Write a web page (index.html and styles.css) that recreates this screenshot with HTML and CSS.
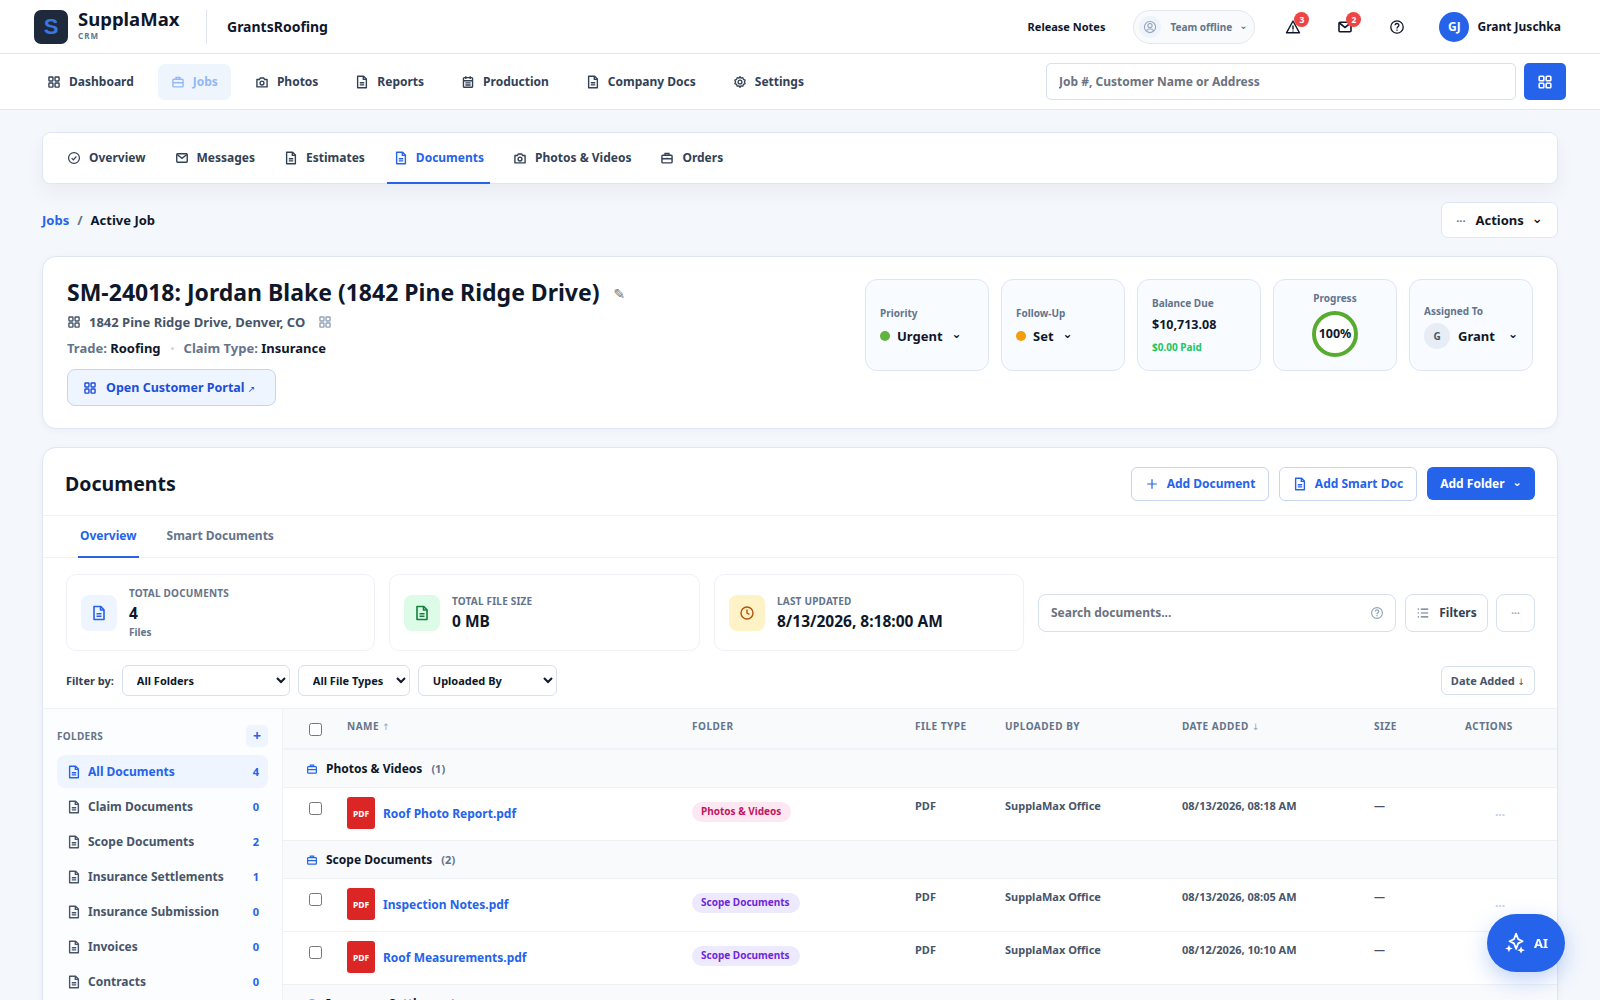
FILE: index.html
```html
<!DOCTYPE html>
<html lang="en">
<head>
<meta charset="utf-8">
<title>SupplaMax CRM - Documents</title>
<link rel="stylesheet" href="styles.css">
</head>
<body>
<svg class="sprite" width="0" height="0" aria-hidden="true">
  <defs>
    <symbol id="i-grid" viewBox="0 0 16 16"><g fill="none" stroke="currentColor" stroke-width="1.6"><rect x="2.2" y="2.2" width="4.6" height="4.6" rx=".7"/><rect x="9.2" y="2.2" width="4.6" height="4.6" rx=".7"/><rect x="2.2" y="9.2" width="4.6" height="4.6" rx=".7"/><rect x="9.2" y="9.2" width="4.6" height="4.6" rx=".7"/></g></symbol>
    <symbol id="i-case" viewBox="0 0 16 16"><g fill="none" stroke="currentColor" stroke-width="1.6"><rect x="2.2" y="4.800" width="11.600" height="8.800" rx="1"/><path d="M5.800 4.800V2.800h4.400v2M2.200 8.800h11.600M8 7.800v2"/></g></symbol>
    <symbol id="i-camera" viewBox="0 0 16 16"><g fill="none" stroke="currentColor" stroke-width="1.6"><path d="M2.200 5.200h2.800l1-1.800h4l1 1.800h2.800v8.400H2.200z" stroke-linejoin="round"/><circle cx="8" cy="9.200" r="2.200"/></g></symbol>
    <symbol id="i-doc" viewBox="0 0 16 16"><g fill="none" stroke="currentColor" stroke-width="1.600" stroke-linejoin="round"><path d="M3 1.500h6.800l3.200 3.200v9.800H3z"/><path d="M9.500 1.500v3.500H13M5.500 8.800h5M5.500 11.300h5"/></g></symbol>
    <symbol id="i-cal" viewBox="0 0 16 16"><g fill="none" stroke="currentColor" stroke-width="1.600"><rect x="2.800" y="3" width="10.400" height="11" rx="1"/><path d="M2.800 6.500h10.400M5.500 1.500v3M10.500 1.500v3M5 9h6M5 11.500h6"/></g></symbol>
    <symbol id="i-gear" viewBox="0 0 16 16"><g fill="none" stroke="currentColor" stroke-width="1.500"><circle cx="8" cy="8" r="2.200"/><path d="M8 1.800l1.200 1.700 2-.5.7 2 1.900.9-.7 2 .7 2-1.900.9-.7 2-2-.5L8 14.200l-1.200-1.900-2 .5-.7-2-1.900-.9.7-2-.7-2 1.900-.9.7-2 2 .5z" stroke-linejoin="round"/></g></symbol>
    <symbol id="i-check" viewBox="0 0 16 16"><g fill="none" stroke="currentColor" stroke-width="1.400"><circle cx="8" cy="8" r="6.200"/><path d="M5.300 8.200l1.900 1.900 3.500-3.800"/></g></symbol>
    <symbol id="i-mail" viewBox="0 0 16 16"><g fill="none" stroke="currentColor" stroke-width="1.600"><rect x="2" y="3.200" width="12" height="9.600" rx="1"/><path d="M2.400 4l5.600 4.400L13.600 4"/></g></symbol>
    <symbol id="i-alert" viewBox="0 0 16 16"><g fill="none" stroke="currentColor" stroke-width="1.400"><path d="M8 2L1.500 13.800h13z" stroke-linejoin="round"/><path d="M8 6.400v4M8 11.400v1.100"/></g></symbol>
    <symbol id="i-help" viewBox="0 0 16 16"><g fill="none" stroke="currentColor" stroke-width="1.300"><circle cx="8" cy="8" r="6.200"/><path d="M6.100 6.300c0-2.400 3.800-2.400 3.800-.1 0 1.500-1.900 1.600-1.900 3.200M8 10.400v1.300"/></g></symbol>
    <symbol id="i-user" viewBox="0 0 16 16"><g fill="none" stroke="currentColor" stroke-width="1.200"><circle cx="8" cy="8" r="6.400"/><circle cx="8" cy="6.400" r="2.400"/><path d="M3.800 12.600c1-2 2.400-2.600 4.200-2.600s3.200.6 4.200 2.600"/></g></symbol>
    <symbol id="i-list" viewBox="0 0 16 16"><g fill="none" stroke="currentColor" stroke-width="1.300"><path d="M5.500 3.500H14M5.500 8H14M5.500 12.500H14M2 3.500h1.400M2 8h1.400M2 12.500h1.400"/></g></symbol>
    <symbol id="i-clock" viewBox="0 0 16 16"><g fill="none" stroke="currentColor" stroke-width="1.400"><circle cx="8" cy="8" r="6"/><path d="M8 4.500V8l2.400 1.500"/></g></symbol>
    <symbol id="i-plus" viewBox="0 0 16 16"><path d="M8 2.500v11M2.500 8h11" fill="none" stroke="currentColor" stroke-width="1.400"/></symbol>
    <symbol id="i-spark" viewBox="0 0 20 20"><path d="M11 1.500l1.900 5 4.100 1.900-4.100 1.900-1.900 5-1.900-5L5 8.400l4.100-1.900z" fill="none" stroke="currentColor" stroke-width="1.600" stroke-linejoin="round"/><path d="M4.500 11.500l1 2.500 2.500 1-2.500 1-1 2.500-1-2.500L1 15l2.500-1zM15.500 13l1 2.500 2.500 1-2.500 1-1 2-1-2-2.500-1 2.500-1z" fill="currentColor"/></symbol>
  </defs>
</svg>

<header class="topbar">
  <div class="brand">
    <span class="logo">S</span>
    <div class="brand-text"><span class="brand-name">SupplaMax</span><span class="brand-sub">CRM</span></div>
    <span class="brand-org">GrantsRoofing</span>
  </div>
  <div class="top-right">
    <a class="release">Release Notes</a>
    <div class="team-pill">
      <span class="team-ic"><svg class="ic14"><use href="#i-user"/></svg></span>
      <span>Team offline</span><span class="chev">⌄</span>
    </div>
    <span class="bell"><svg class="ic16"><use href="#i-alert"/></svg><b class="badge">3</b></span>
    <span class="bell mail"><svg class="ic16"><use href="#i-mail"/></svg><b class="badge">2</b></span>
    <span class="bell help"><svg class="ic16"><use href="#i-help"/></svg></span>
    <div class="user"><span class="avatar">GJ</span><span>Grant Juschka</span></div>
  </div>
</header>

<nav class="mainnav">
  <div class="nav-items">
    <a class="nav-item"><svg class="ic14"><use href="#i-grid"/></svg>Dashboard</a>
    <a class="nav-item is-active"><svg class="ic14"><use href="#i-case"/></svg>Jobs</a>
    <a class="nav-item"><svg class="ic14"><use href="#i-camera"/></svg>Photos</a>
    <a class="nav-item"><svg class="ic14"><use href="#i-doc"/></svg>Reports</a>
    <a class="nav-item"><svg class="ic14"><use href="#i-cal"/></svg>Production</a>
    <a class="nav-item"><svg class="ic14"><use href="#i-doc"/></svg>Company Docs</a>
    <a class="nav-item"><svg class="ic14"><use href="#i-gear"/></svg>Settings</a>
  </div>
  <div class="nav-search">
    <input class="nav-input" type="text" placeholder="Job #, Customer Name or Address">
    <button class="nav-btn"><svg class="ic16"><use href="#i-grid"/></svg></button>
  </div>
</nav>

<main class="content">
  <div class="card tabs">
    <a class="tab"><svg class="ic14"><use href="#i-check"/></svg>Overview</a>
    <a class="tab"><svg class="ic14"><use href="#i-mail"/></svg>Messages</a>
    <a class="tab"><svg class="ic14"><use href="#i-doc"/></svg>Estimates</a>
    <a class="tab is-active"><svg class="ic14"><use href="#i-doc"/></svg>Documents</a>
    <a class="tab"><svg class="ic14"><use href="#i-camera"/></svg>Photos &amp; Videos</a>
    <a class="tab"><svg class="ic14"><use href="#i-case"/></svg>Orders</a>
  </div>

  <div class="crumbs">
    <div class="crumb-path"><a class="crumb-link">Jobs</a><span class="crumb-sep">/</span><span>Active Job</span></div>
    <button class="actions-btn"><span class="dots">···</span>Actions<span class="chev">⌄</span></button>
  </div>

  <section class="card job">
    <div class="job-left">
      <h1 class="job-title">SM-24018: Jordan Blake (1842 Pine Ridge Drive)<span class="pencil">✎</span></h1>
      <div class="job-addr"><svg class="ic14"><use href="#i-grid"/></svg><span>1842 Pine Ridge Drive, Denver, CO</span><svg class="ic14 faint"><use href="#i-grid"/></svg></div>
      <div class="job-meta"><span>Trade: <b>Roofing</b></span><i class="sep-dot"></i><span>Claim Type: <b>Insurance</b></span></div>
      <a class="portal-btn"><svg class="ic14"><use href="#i-grid"/></svg><span>Open Customer Portal <small class="out">↗</small></span></a>
    </div>
    <div class="tiles">
      <div class="tile tile-left"><span class="tile-label">Priority</span><div class="tile-val"><i class="dot green"></i>Urgent<span class="chev">⌄</span></div></div>
      <div class="tile tile-left"><span class="tile-label">Follow-Up</span><div class="tile-val"><i class="dot orange"></i>Set<span class="chev">⌄</span></div></div>
      <div class="tile tile-left tile-tight"><span class="tile-label">Balance Due</span><div class="tile-money">$10,713.08</div><div class="tile-paid">$0.00 Paid</div></div>
      <div class="tile tile-center"><span class="tile-label">Progress</span><div class="ring">100%</div></div>
      <div class="tile tile-left"><span class="tile-label">Assigned To</span><div class="tile-val assigned"><span class="mini-av">G</span>Grant<span class="chev push">⌄</span></div></div>
    </div>
  </section>

  <section class="card docs">
    <div class="docs-head">
      <h2 class="docs-title">Documents</h2>
      <div class="docs-btns">
        <button class="btn-outline btn-doc"><svg class="ic14"><use href="#i-plus"/></svg>Add Document</button>
        <button class="btn-outline btn-smart"><svg class="ic14"><use href="#i-doc"/></svg>Add Smart Doc</button>
        <button class="btn-solid">Add Folder<span class="chev">⌄</span></button>
      </div>
    </div>
    <div class="subtabs"><a class="subtab is-active">Overview</a><a class="subtab">Smart Documents</a></div>

    <div class="stats-row">
      <div class="stat stat-a"><span class="stat-ic blue"><svg class="ic16"><use href="#i-doc"/></svg></span><div class="stat-text"><span class="stat-label">Total Documents</span><span class="stat-val">4</span><span class="stat-note">Files</span></div></div>
      <div class="stat stat-b"><span class="stat-ic mint"><svg class="ic16"><use href="#i-doc"/></svg></span><div class="stat-text"><span class="stat-label">Total File Size</span><span class="stat-val">0 MB</span></div></div>
      <div class="stat stat-c"><span class="stat-ic amber"><svg class="ic16"><use href="#i-clock"/></svg></span><div class="stat-text"><span class="stat-label">Last Updated</span><span class="stat-val">8/13/2026, 8:18:00 AM</span></div></div>
      <div class="doc-tools">
        <div class="doc-search"><input class="doc-input" type="text" placeholder="Search documents..."><svg class="ic14 faint"><use href="#i-help"/></svg></div>
        <button class="tool-btn"><svg class="ic14"><use href="#i-list"/></svg>Filters</button>
        <button class="tool-btn more">···</button>
      </div>
    </div>

    <div class="filter-row">
      <span class="filter-label">Filter by:</span>
      <select class="sel sel-a"><option>All Folders</option></select>
      <select class="sel sel-b"><option>All File Types</option></select>
      <select class="sel sel-c"><option>Uploaded By</option></select>
      <button class="sort-btn">Date Added <small class="out">↓</small></button>
    </div>

    <div class="docs-body">
      <aside class="folders">
        <div class="folders-head"><span>Folders</span><button class="folder-add">+</button></div>
        <a class="folder is-active"><svg class="ic14"><use href="#i-doc"/></svg><span>All Documents</span><b>4</b></a>
        <a class="folder"><svg class="ic14"><use href="#i-doc"/></svg><span>Claim Documents</span><b>0</b></a>
        <a class="folder"><svg class="ic14"><use href="#i-doc"/></svg><span>Scope Documents</span><b>2</b></a>
        <a class="folder"><svg class="ic14"><use href="#i-doc"/></svg><span>Insurance Settlements</span><b>1</b></a>
        <a class="folder"><svg class="ic14"><use href="#i-doc"/></svg><span>Insurance Submission</span><b>0</b></a>
        <a class="folder"><svg class="ic14"><use href="#i-doc"/></svg><span>Invoices</span><b>0</b></a>
        <a class="folder"><svg class="ic14"><use href="#i-doc"/></svg><span>Contracts</span><b>0</b></a>
      </aside>
      <div class="doc-table">
        <div class="t-row t-head">
          <span><input type="checkbox" class="cb"></span>
          <span>Name <small>↑</small></span><span>Folder</span><span>File Type</span><span>Uploaded By</span><span>Date Added <small>↓</small></span><span>Size</span><span>Actions</span>
        </div>
        <div class="t-group"><svg class="ic12"><use href="#i-case"/></svg><b>Photos &amp; Videos</b><span>(1)</span></div>
        <div class="t-row t-item">
          <span><input type="checkbox" class="cb"></span>
          <span class="t-name"><i class="pdf">PDF</i><a>Roof Photo Report.pdf</a></span>
          <span><em class="tag pink">Photos &amp; Videos</em></span><span>PDF</span><span>SupplaMax Office</span><span>08/13/2026, 08:18 AM</span><span>—</span><span class="t-more">···</span>
        </div>
        <div class="t-group"><svg class="ic12"><use href="#i-case"/></svg><b>Scope Documents</b><span>(2)</span></div>
        <div class="t-row t-item">
          <span><input type="checkbox" class="cb"></span>
          <span class="t-name"><i class="pdf">PDF</i><a>Inspection Notes.pdf</a></span>
          <span><em class="tag violet">Scope Documents</em></span><span>PDF</span><span>SupplaMax Office</span><span>08/13/2026, 08:05 AM</span><span>—</span><span class="t-more">···</span>
        </div>
        <div class="t-row t-item">
          <span><input type="checkbox" class="cb"></span>
          <span class="t-name"><i class="pdf">PDF</i><a>Roof Measurements.pdf</a></span>
          <span><em class="tag violet">Scope Documents</em></span><span>PDF</span><span>SupplaMax Office</span><span>08/12/2026, 10:10 AM</span><span>—</span><span class="t-more">···</span>
        </div>
        <div class="t-group"><svg class="ic12"><use href="#i-case"/></svg><b>Insurance Settlements</b><span>(1)</span></div>
      </div>
    </div>
  </section>
</main>

<button class="ai-btn"><svg class="ic20"><use href="#i-spark"/></svg>AI</button>
</body>
</html>
```
FILE: styles.css
```css
* { box-sizing: border-box; }
html, body { height: 100%; overflow: hidden; }
body {
  margin: 0;
  background: #f4f7fc;
  color: #0f172a;
  font-family: "Noto Sans", "DejaVu Sans", sans-serif;
  font-size: 12px;
  font-weight: 700;
}
a { color: inherit; text-decoration: none; }
button, input, select { font-family: inherit; font-weight: 700; }
button { cursor: pointer; }
b { font-weight: 700; }
i, em { font-style: normal; }
.sprite { position: absolute; }
.ic12, .ic14, .ic16, .ic20 { flex: none; display: block; }
.ic12 { width: 12px; height: 12px; }
.ic14 { width: 14px; height: 14px; }
.ic16 { width: 16px; height: 16px; }
.ic20 { width: 22px; height: 22px; }
.faint { color: #94a3b8; }
.chev { line-height: 1; font-size: 13px; position: relative; top: -2px; margin-left: 8px; }
.out { font-size: 9px; font-weight: 400; }

/* top bar */
.topbar {
  height: 54px;
  background: #fff;
  border-bottom: 1px solid #dfe6f0;
  padding: 0 39px 0 34px;
  display: flex;
  align-items: center;
  justify-content: space-between;
}
.brand { display: flex; align-items: center; }
.logo {
  width: 34px; height: 34px;
  border-radius: 7px;
  background: #1e293b;
  color: #3b76e0;
  font: 700 22px/34px "Liberation Sans", sans-serif;
  text-align: center;
}
.brand-text { display: flex; flex-direction: column; margin-left: 10px; width: 129px; height: 34px; border-right: 1px solid #dfe6f0; }
.brand-name { font-size: 18.500px; line-height: 24px; margin-top: -3px; }
.brand-sub { font-size: 8px; line-height: 9px; letter-spacing: 1px; color: #64748b; }
.brand-org { font-size: 14px; margin-left: 20px; }
.top-right { display: flex; align-items: center; }
.release { font-size: 11px; margin-right: 28px; }
.team-pill {
  width: 122px; height: 34px;
  border: 1px solid #e2e8f0; border-radius: 17px;
  background: #f8fafc;
  color: #64748b;
  font-size: 10px;
  display: flex; align-items: center;
  padding-left: 5px;
}
.team-pill .chev { margin-left: 7px; font-size: 10px; }
.team-ic { width: 22px; height: 22px; border-radius: 50%; background: #eff3fa; color: #94a3b8; display: flex; align-items: center; justify-content: center; margin-right: 9px; }
.bell { position: relative; margin-left: 30px; color: #0f172a; }
.bell.mail { margin-left: 36px; }
.bell.help { margin-left: 36px; }
.badge {
  position: absolute; top: -7px; right: -8px;
  width: 15px; height: 15px; border-radius: 50%;
  background: #ef4444; color: #fff;
  font-size: 8.500px; line-height: 15px; text-align: center;
}
.user { display: flex; align-items: center; gap: 8px; margin-left: 34px; font-size: 12px; }
.avatar { width: 30px; height: 30px; border-radius: 50%; background: #2563eb; color: #fff; font-size: 12px; line-height: 30px; text-align: center; }

/* main nav */
.mainnav {
  height: 56px;
  background: #fff;
  border-bottom: 1px solid #dfe6f0;
  padding: 0 34px;
  display: flex; align-items: center; justify-content: space-between;
}
.nav-items { display: flex; gap: 11px; }
.nav-item { height: 36px; padding: 0 13px; display: flex; align-items: center; gap: 8px; border-radius: 7px; color: #334155; font-size: 12px; }
.nav-item.is-active { background: #eff5fd; color: #93b8f5; }
.nav-search { display: flex; gap: 8px; }
.nav-input {
  width: 470px; height: 37px;
  border: 1px solid #d5e0f0; border-radius: 5px;
  padding: 0 12px; font-size: 12px; outline: none; background: #fff;
}
.nav-input::placeholder { color: #6b7280; opacity: 1; }
.nav-btn { width: 42px; height: 37px; border: 0; border-radius: 5px; background: #2563eb; color: #fff; display: flex; align-items: center; justify-content: center; }

/* content */
.content { padding: 22px 42px 0; }
.card { background: #fff; border: 1px solid #dfe6f3; box-shadow: 0 2px 8px rgba(15, 23, 42, .04); }
.tabs { height: 52px; border-radius: 8px; padding: 0 17px; display: flex; gap: 16px; box-shadow: 0 8px 20px rgba(15, 23, 42, .05); }
.tab { height: 51px; padding: 0 6px 0 7px; display: flex; align-items: center; gap: 8px; color: #334155; font-size: 12px; border-bottom: 2px solid transparent; }
.tab.is-active { color: #2563eb; border-bottom-color: #2563eb; }

.crumbs { display: flex; align-items: center; justify-content: space-between; margin-top: 18px; height: 36px; }
.crumb-path { display: flex; gap: 8px; font-size: 13px; }
.crumb-link { color: #2563eb; }
.crumb-sep { color: #64748b; }
.actions-btn {
  width: 117px; height: 36px;
  border: 1px solid #dfe6f3; border-radius: 7px; background: #fff; color: #0f172a;
  font-size: 13px;
  display: flex; align-items: center; justify-content: center;
}
.dots { color: #64748b; font-size: 11px; margin-right: 10px; }

.job {
  margin-top: 18px;
  height: 173px;
  border-radius: 14px;
  padding: 21px 24px 0 24px;
  display: flex; justify-content: space-between; align-items: flex-start;
}
.job-title { margin: 0; font-size: 23px; line-height: 28px; font-weight: 700; }
.pencil { font-size: 14px; color: #64748b; margin-left: 14px; font-weight: 400; vertical-align: 2px; }
.job-addr { display: flex; align-items: center; gap: 8px; margin-top: 5px; height: 18px; color: #475569; font-size: 13px; }
.job-addr .faint { margin-left: 5px; }
.job-meta { display: flex; align-items: center; gap: 10px; margin-top: 8px; height: 18px; color: #64748b; font-size: 13px; }
.job-meta b { color: #0f172a; }
.sep-dot { width: 3px; height: 3px; border-radius: 50%; background: #cbd5e1; }
.portal-btn {
  width: 209px; height: 37px; margin-top: 12px;
  border: 1px solid #bfd5fb; border-radius: 8px; background: #eff5ff; color: #1d4ed8;
  display: flex; align-items: center; gap: 9px; padding-left: 15px; font-size: 12.500px;
}
.tiles { display: flex; gap: 12px; margin-top: 1px; }
.tile { width: 124px; height: 92px; border: 1px solid #dfe6f3; border-radius: 12px; background: #f8fbff; display: flex; flex-direction: column; }
.tile-left { justify-content: center; padding: 2px 14px 0; }
.tile-tight { padding-top: 0; }
.tile-center { align-items: center; padding-top: 11px; }
.tile-label { font-size: 10px; line-height: 14px; color: #64748b; }
.tile-val { display: flex; align-items: center; margin-top: 6px; font-size: 13px; line-height: 20px; }
.tile-val .chev { margin-left: 9px; font-size: 12px; }
.dot { width: 10px; height: 10px; border-radius: 50%; margin-right: 7px; }
.green { background: #62b33f; }
.orange { background: #f59e0b; }
.tile-money { font-size: 12.500px; line-height: 18px; margin-top: 6px; }
.tile-paid { font-size: 10px; line-height: 14px; margin-top: 6px; color: #22c55e; }
.ring { width: 46px; height: 46px; margin-top: 6px; border: 4px solid #57ab2e; border-radius: 50%; background: #fff; font-size: 12.500px; line-height: 38px; text-align: center; white-space: nowrap; }
.assigned { margin-top: 5px; }
.mini-av { width: 26px; height: 26px; border-radius: 50%; background: #e8edf5; color: #475569; font-size: 10px; line-height: 26px; text-align: center; margin-right: 8px; }
.push { margin-left: auto !important; }

/* documents */
.docs { margin-top: 18px; border-radius: 14px 14px 0 0; height: 800px; }
.docs-head { height: 68px; padding: 4px 22px 0; border-bottom: 1px solid #eef2f7; display: flex; align-items: center; justify-content: space-between; }
.docs-title { margin: 0; font-size: 19.500px; font-weight: 700; }
.docs-btns { display: flex; gap: 10px; }
.btn-outline { height: 34px; border: 1px solid #c6d6f0; border-radius: 6px; background: #fff; color: #2563eb; font-size: 12px; display: flex; align-items: center; justify-content: center; gap: 8px; }
.btn-doc { width: 138px; }
.btn-smart { width: 138px; }
.btn-solid { width: 108px; height: 33px; border: 0; border-radius: 6px; background: #2563eb; color: #fff; font-size: 12px; }
.btn-solid .chev { font-size: 11px; }
.subtabs { height: 42px; padding: 0 35px; display: flex; gap: 30px; border-bottom: 1px solid #eef2f7; }
.subtab { height: 42px; line-height: 39px; color: #64748b; font-size: 12px; border-bottom: 2px solid transparent; }
.subtab.is-active { color: #2563eb; border-bottom-color: #2563eb; padding: 0 2px; margin-right: -2px; }
.stats-row { display: flex; align-items: center; padding: 16px 22px 0 23px; }
.stat { height: 77px; border: 1px solid #eef2f7; border-radius: 10px; background: #fff; display: flex; align-items: center; padding-left: 14px; flex: none; }
.stat-a { width: 309px; margin-right: 14px; }
.stat-b { width: 311px; margin-right: 14px; }
.stat-c { width: 310px; margin-right: 14px; }
.stat-ic { width: 36px; height: 36px; border-radius: 8px; display: flex; align-items: center; justify-content: center; margin-right: 12px; }
.blue { background: #eff5ff; color: #2563eb; }
.mint { background: #dcfce7; color: #15803d; }
.amber { background: #fef3c7; color: #b45309; }
.stat-text { display: flex; flex-direction: column; }
.stat-label { font-size: 10px; line-height: 14px; text-transform: uppercase; color: #64748b; letter-spacing: .2px; }
.stat-val { font-size: 15.500px; line-height: 20px; margin-top: 3px; }
.stat-note { font-size: 10px; line-height: 14px; color: #64748b; margin-top: 2px; }
.doc-tools { display: flex; gap: 9px; flex: 1; }
.doc-search { width: 358px; height: 38px; border: 1px solid #d5e0f0; border-radius: 8px; display: flex; align-items: center; padding-right: 11px; }
.doc-input { flex: 1; min-width: 0; border: 0; outline: 0; background: transparent; padding: 0 12px; font-size: 12px; }
.doc-input::placeholder { color: #6b7280; opacity: 1; }
.tool-btn { width: 83px; height: 38px; border: 1px solid #d5e0f0; border-radius: 8px; background: #fff; color: #334155; font-size: 12px; display: flex; align-items: center; justify-content: center; gap: 9px; }
.tool-btn .ic14 { color: #64748b; }
.tool-btn.more { width: 39px; color: #94a3b8; font-size: 10px; margin-left: -1px; }
.filter-row { display: flex; align-items: center; gap: 8px; padding: 0 22px 0 23px; margin-top: 14px; height: 31px; }
.filter-label { font-size: 11px; color: #334155; }
.sel { height: 31px; border: 1px solid #d5e0f0; border-radius: 6px; background: #fff; color: #0f172a; font-size: 11px; padding: 0 10px; }
.sel-a { width: 168px; }
.sel-b { width: 112px; }
.sel-c { width: 139px; }
.sort-btn { margin-left: auto; width: 94px; height: 29px; border: 1px solid #d5e0f0; border-radius: 6px; background: #fff; color: #475569; font-size: 11px; padding: 0; }

.docs-body { display: flex; margin-top: 12px; border-top: 1px solid #eef2f7; height: 500px; }
.folders { width: 240px; flex: none; background: #fcfdfe; border-right: 1px solid #eef2f7; padding: 15px 14px 0 14px; }
.folders-head { display: flex; align-items: center; justify-content: space-between; height: 23px; margin-bottom: 8px; color: #64748b; font-size: 10px; text-transform: uppercase; letter-spacing: .3px; }
.folder-add { width: 22px; height: 22px; border: 0; border-radius: 5px; background: #eff5ff; color: #2563eb; font-size: 14px; line-height: 20px; padding: 0; }
.folder { height: 33px; margin-bottom: 2px; padding: 0 9px 0 10px; border-radius: 8px; display: flex; align-items: center; color: #475569; font-size: 12px; }
.folder .ic14 { margin-right: 7px; }
.folder span { flex: 1; white-space: nowrap; }
.folder b { color: #2563eb; font-size: 11px; }
.folder.is-active { background: #eff5ff; color: #2563eb; }
.doc-table { flex: 1; min-width: 0; }
.t-row { display: grid; grid-template-columns: 38px 345px 223px 90px 177px 192px 91px 1fr; padding-left: 26px; }
.t-head { height: 41px; padding-top: 10px; background: #f8fafc; border-bottom: 2px solid #eef2f9; color: #64748b; font-size: 10px; text-transform: uppercase; letter-spacing: .5px; line-height: 15px; }
.t-head small { font-size: 9px; color: #94a3b8; font-weight: 400; }
.cb { margin: 4px 0 0; display: block; width: 13px; height: 13px; }
.t-group { height: 38px; padding-left: 23px; background: #f8fafc; border-bottom: 1px solid #eef2f7; display: flex; align-items: center; font-size: 12px; }
.t-group .ic12 { color: #2563eb; margin-right: 8px; }
.t-group span { color: #64748b; font-size: 11px; margin-left: 9px; }
.t-item { height: 53px; padding-top: 9px; border-bottom: 1px solid #eef2f7; background: #fff; color: #475569; font-size: 11px; line-height: 18px; }
.t-item .cb { margin-top: 5px; }
.t-name { display: flex; align-items: flex-start; gap: 8px; }
.t-name a { color: #2563eb; font-size: 12px; line-height: 34px; }
.pdf { width: 28px; height: 32px; border-radius: 3px; background: #dc2626; color: #fff; font-size: 8.500px; line-height: 33px; text-align: center; flex: none; }
.tag { display: inline-block; height: 20px; margin-top: 5px; padding: 0 10px 0 9px; border-radius: 10px; font-size: 10px; line-height: 19px; white-space: nowrap; }
.pink { background: #fce7f3; color: #be185d; }
.violet { background: #ede9fe; color: #6d28d9; }
.t-more { color: #bcd0f5; font-size: 12px; padding-top: 9px; padding-left: 30px; }
.ai-btn {
  position: fixed; right: 35px; top: 914px;
  width: 78px; height: 58px;
  border: 0; border-radius: 29px;
  background: #2563eb; color: #fff;
  font-size: 13px;
  display: flex; align-items: center; justify-content: center; gap: 8px;
  box-shadow: 0 8px 22px rgba(37, 99, 235, .28);
}
```
